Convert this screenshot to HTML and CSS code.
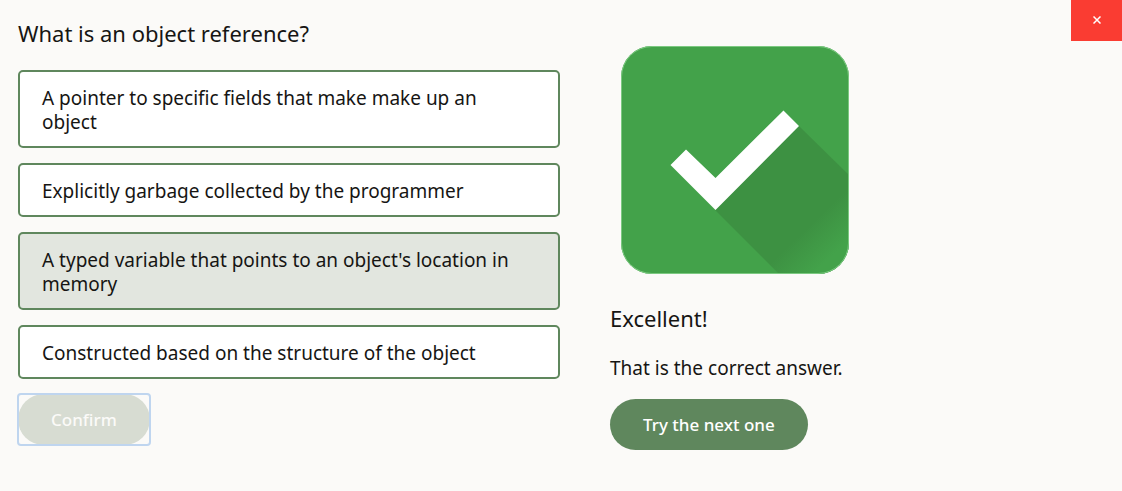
FILE: index.html
```html
<!DOCTYPE html>
<html lang="en">
<head>
<meta charset="utf-8">
<title>Quiz</title>
<meta name="viewport" content="width=device-width, initial-scale=1">
<link rel="stylesheet" href="styles.css">
</head>
<body>
<button class="close" type="button" aria-label="Close"><svg class="close-icon" viewBox="0 0 8 8" aria-hidden="true"><path d="M.5 .5l7 7M7.500 .5l-7 7"/></svg></button>
<main class="quiz">
  <section class="question">
    <h1 class="title">What is an object reference?</h1>
    <div class="options">
      <button class="option" type="button" aria-pressed="false">A pointer to specific fields that make make up an object</button>
      <button class="option" type="button" aria-pressed="false">Explicitly garbage collected by the programmer</button>
      <button class="option option-selected" type="button" aria-pressed="true">A typed variable that points to an object's location in memory</button>
      <button class="option" type="button" aria-pressed="false">Constructed based on the structure of the object</button>
    </div>
    <button class="pill confirm" type="button" disabled>Confirm</button>
  </section>
  <section class="result">
    <svg class="badge" viewBox="0 0 228 228" role="img" aria-label="Correct">
      <defs>
        <linearGradient id="shade" gradientUnits="userSpaceOnUse" x1="182" y1="186" x2="208" y2="213">
          <stop offset="0" stop-color="#3d9142"/>
          <stop offset="1" stop-color="#43a24a"/>
        </linearGradient>
        <clipPath id="tile"><rect width="228" height="228" rx="31"/></clipPath>
      </defs>
      <g clip-path="url(#tile)">
        <path fill="#43a24a" d="M0 0h228v228H0z"/>
        <path fill="url(#shade)" d="M178 80l50 49v99h-70l-64-64z"/>
      </g>
      <rect x=".5" y=".5" width="227" height="227" rx="30.5" fill="none" stroke="#7cc981"/>
      <path fill="#fff" d="M49.500 119L65 103.500 94.500 132 162.500 64.500 178 80 94.500 164z"/>
    </svg>
    <h2 class="title verdict">Excellent!</h2>
    <p class="message">That is the correct answer.</p>
    <button class="pill next" type="button">Try the next one</button>
  </section>
</main>
</body>
</html>
```
FILE: styles.css
```css
* {
  box-sizing: border-box;
}

body {
  margin: 0;
  background: #fbfaf8;
  color: #161513;
  font: 19px/24px "Noto Sans", "Open Sans", sans-serif;
}

button {
  font: inherit;
  color: inherit;
  cursor: pointer;
}

.close {
  position: absolute;
  top: 0;
  right: 0;
  display: grid;
  place-items: center;
  width: 51px;
  height: 41px;
  padding: 0 0 2px;
  border: 0;
  background: #fa3c32;
}

.close-icon {
  width: 8px;
  height: 8px;
  fill: none;
  stroke: #fff;
  stroke-width: 1.5;
}

.quiz {
  display: grid;
  grid-template-columns: 18fr 17fr;
  column-gap: 50px;
  padding: 17px 0 18px 18px;
}

.title {
  margin: 0;
  font-size: 22px;
  line-height: 32px;
  font-weight: 400;
}

.options {
  display: grid;
  gap: 15px;
  margin: 21px 0 15px;
}

.option {
  padding: 14px 22px 12px;
  border: 2px solid #5f875d;
  border-radius: 5px;
  background: #fff;
  text-align: left;
}

.option-selected {
  background: #e2e6df;
}

.pill {
  height: 51px;
  padding: 0 33px;
  border: 0;
  border-radius: 26px;
  background: #5f875d;
  color: #fff;
  font-size: 17px;
  font-weight: 500;
}

.confirm {
  position: relative;
  display: block;
  background: #d7dcd2;
  color: #fbfaf8;
}

.confirm::after {
  content: "";
  position: absolute;
  inset: -1px;
  border: 2px solid #bfd5ef;
  border-radius: 4px;
}

.result {
  padding-top: 29px;
}

.badge {
  display: block;
  width: 228px;
  height: 228px;
  margin-left: 11px;
}

.verdict {
  margin-top: 28px;
}

.message {
  margin: 22px 0 19px;
}
```
